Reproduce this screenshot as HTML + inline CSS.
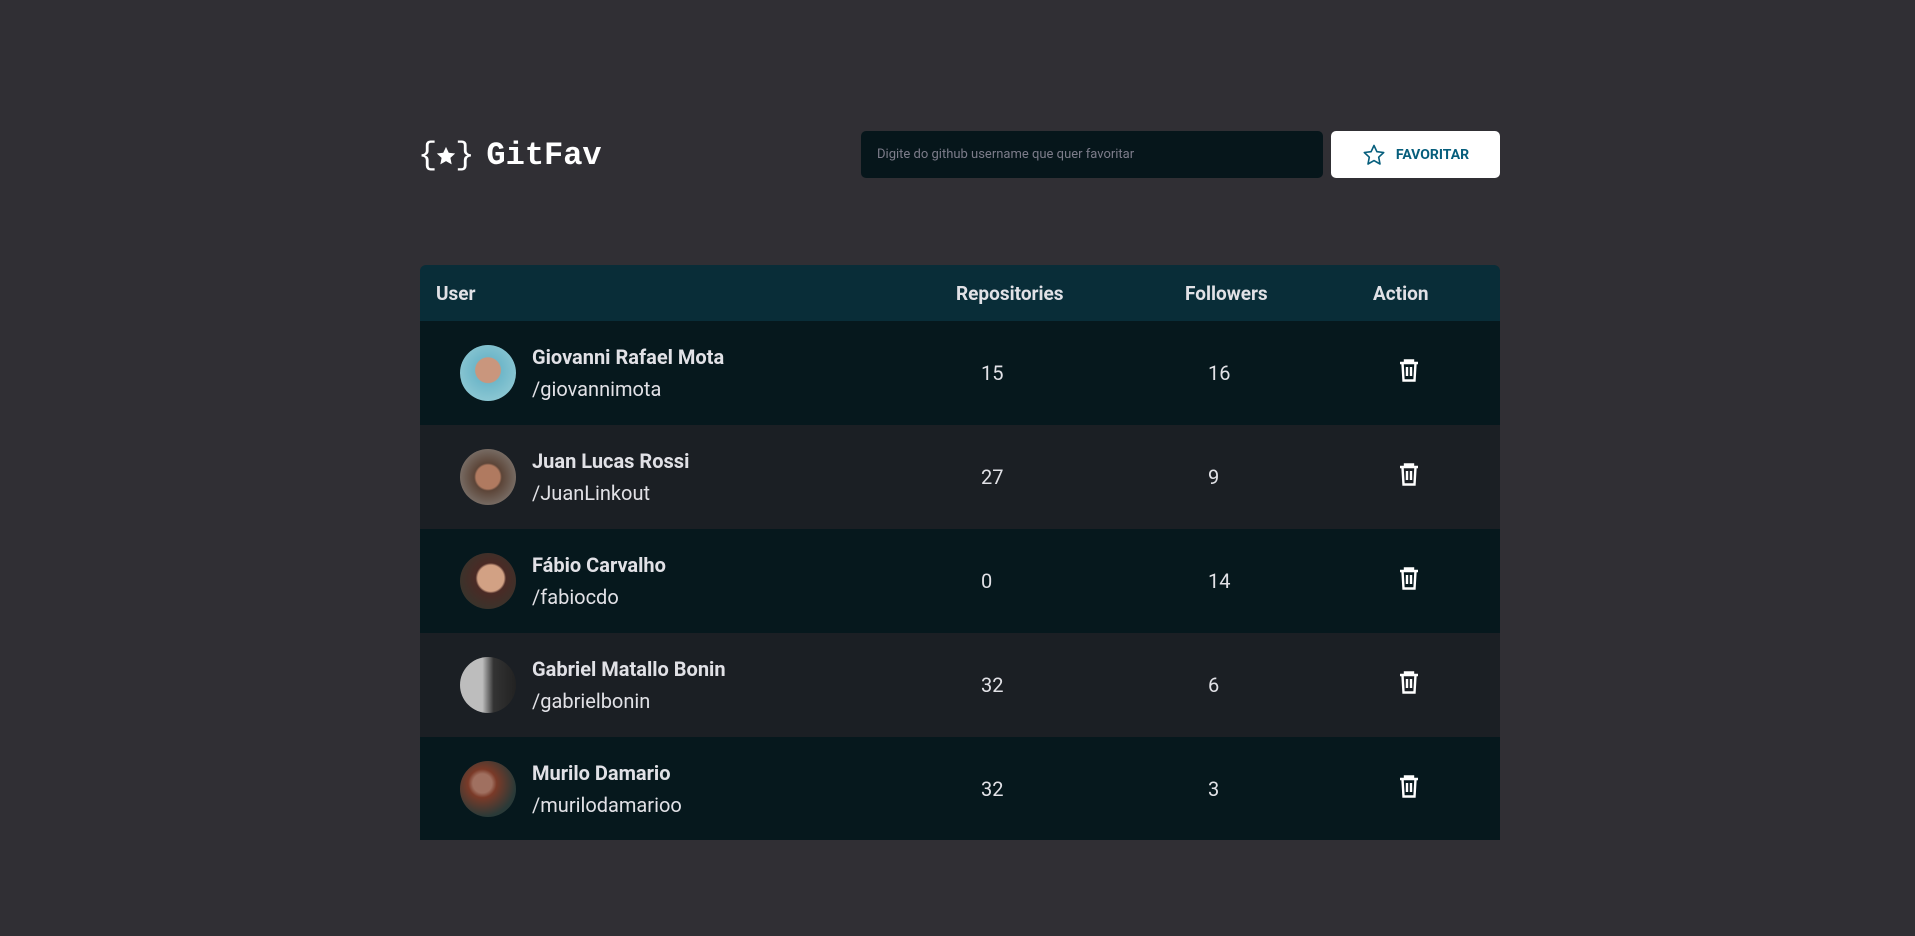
<!DOCTYPE html>
<html><head><meta charset="utf-8"><style>
*{margin:0;padding:0;box-sizing:border-box}
body{width:1915px;height:936px;background:#302f34;font-family:"Roboto","Liberation Sans",sans-serif;color:#e1e1e6;position:relative;overflow:hidden}
.abs{position:absolute}
.logo{left:418px;top:136px;font-family:"Liberation Mono",monospace;font-size:32px;color:#fff;white-space:nowrap;line-height:40px;display:flex;align-items:center}
.input{left:861px;top:131px;width:462px;height:47px;background:#06161b;border-radius:5px;color:#7c7c8a;font-size:13px;line-height:47px;padding-left:16px}
.btn{left:1331px;top:131px;width:169px;height:47px;background:#fff;border-radius:5px;color:#065e7c;font-size:14px;font-weight:bold;display:flex;align-items:center;justify-content:center;gap:10px}
.head{left:420px;top:265px;width:1080px;height:56px;background:#092d38;border-radius:6px 6px 0 0;font-weight:bold;font-size:19px}
.head span{position:absolute;top:17px}
.row{left:420px;width:1080px;height:104px;font-size:20px}
.av{position:absolute;left:40px;top:24px;width:56px;height:56px;border-radius:50%}
.nm{position:absolute;left:112px;top:24px;font-weight:bold}
.un{position:absolute;left:112px;top:56px}
.n1{position:absolute;left:561px;top:40px}
.n2{position:absolute;left:788px;top:40px}
.tr{position:absolute;left:978px;top:36px}
</style></head><body>
<div class="abs logo"><span>{</span><svg width="22" height="22" viewBox="0 0 24 24" style="margin:0 -2px"><path d="M12 2l3 6.5 7 .8-5.2 4.8 1.4 7L12 17.6 5.8 21.1l1.4-7L2 9.3l7-.8z" fill="#fff"/></svg><span>}</span><span style="margin-left:12px;font-weight:bold">GitFav</span></div>
<div class="abs input">Digite do github username que quer favoritar</div>
<div class="abs btn"><svg width="24" height="24" viewBox="0 0 24 24"><path d="M12 2.5l2.9 6.2 6.8.8-5 4.7 1.3 6.8L12 17.6l-6 3.4 1.3-6.8-5-4.7 6.8-.8z" fill="none" stroke="#065e7c" stroke-width="1.6" stroke-linejoin="round"/></svg>FAVORITAR</div>
<div class="abs head"><span style="left:16px">User</span><span style="left:536px">Repositories</span><span style="left:765px">Followers</span><span style="left:953px">Action</span></div>

<div class="abs row" style="top:321px;background:#06181d"><div class="av" style="background:radial-gradient(circle at 50% 45%,#c9967d 0 30%,#6fb7c9 32%,#9cd0d8)"></div><div class="nm">Giovanni Rafael Mota</div><div class="un">/giovannimota</div><div class="n1">15</div><div class="n2">16</div>
<svg class="tr" width="22" height="26" viewBox="0 0 22 26"><path d="M2 6h18M7 6V3.5h8V6M4.5 6l1 17.5h11L17.5 6M9 10v9M13 10v9" fill="none" stroke="#fff" stroke-width="2.4"/></svg></div>

<div class="abs row" style="top:425px;background:#1b1f24"><div class="av" style="background:radial-gradient(circle at 50% 50%,#b07a60 0 30%,#5c4538 35%,#8d8a86)"></div><div class="nm">Juan Lucas Rossi</div><div class="un">/JuanLinkout</div><div class="n1">27</div><div class="n2">9</div>
<svg class="tr" width="22" height="26" viewBox="0 0 22 26"><path d="M2 6h18M7 6V3.5h8V6M4.5 6l1 17.5h11L17.5 6M9 10v9M13 10v9" fill="none" stroke="#fff" stroke-width="2.4"/></svg></div>

<div class="abs row" style="top:529px;background:#06181d"><div class="av" style="background:radial-gradient(circle at 55% 45%,#d2a184 0 30%,#4a2a25 35%,#2e3a30)"></div><div class="nm">Fábio Carvalho</div><div class="un">/fabiocdo</div><div class="n1">0</div><div class="n2">14</div>
<svg class="tr" width="22" height="26" viewBox="0 0 22 26"><path d="M2 6h18M7 6V3.5h8V6M4.5 6l1 17.5h11L17.5 6M9 10v9M13 10v9" fill="none" stroke="#fff" stroke-width="2.4"/></svg></div>

<div class="abs row" style="top:633px;background:#1b1f24"><div class="av" style="background:linear-gradient(90deg,#bdbdbd 0 40%,#333 60%,#222)"></div><div class="nm">Gabriel Matallo Bonin</div><div class="un">/gabrielbonin</div><div class="n1">32</div><div class="n2">6</div>
<svg class="tr" width="22" height="26" viewBox="0 0 22 26"><path d="M2 6h18M7 6V3.5h8V6M4.5 6l1 17.5h11L17.5 6M9 10v9M13 10v9" fill="none" stroke="#fff" stroke-width="2.4"/></svg></div>

<div class="abs row" style="top:737px;height:103px;background:#06181d"><div class="av" style="background:radial-gradient(circle at 40% 40%,#a07060 0 20%,#7a3a28 30%,#2a3a38 70%)"></div><div class="nm">Murilo Damario</div><div class="un">/murilodamarioo</div><div class="n1">32</div><div class="n2">3</div>
<svg class="tr" width="22" height="26" viewBox="0 0 22 26"><path d="M2 6h18M7 6V3.5h8V6M4.5 6l1 17.5h11L17.5 6M9 10v9M13 10v9" fill="none" stroke="#fff" stroke-width="2.4"/></svg></div>
</body></html>
